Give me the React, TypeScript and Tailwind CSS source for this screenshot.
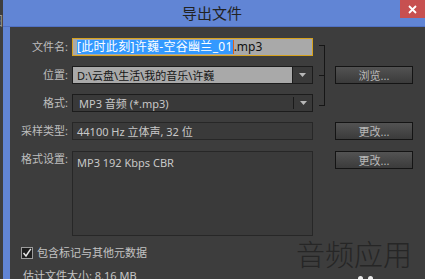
import React from "react";

const font = "font-['Noto_Sans','Noto_Sans_CJK_SC',sans-serif]";

function Label({ children, top }: { children: React.ReactNode; top?: boolean }) {
  return (
    <div
      className={`w-[58px] shrink-0 text-right text-[11px] leading-[14px] text-[#bdbdbd] ${
        top ? "self-start pt-[1px]" : ""
      }`}
    >
      {children}
    </div>
  );
}

function Caret() {
  return (
    <svg width="7" height="4" viewBox="0 0 7 4" className="block">
      <path d="M0 0H7L3.5 4Z" fill="#b8b8b8" />
    </svg>
  );
}

function Btn({ children, className = "" }: { children: React.ReactNode; className?: string }) {
  return (
    <div
      className={`flex h-[18px] w-[78px] shrink-0 items-center justify-center border border-[#141414] bg-gradient-to-b from-[#535353] to-[#3b3b3b] text-[11px] leading-none text-[#b9b9b9] ${className}`}
    >
      {children}
    </div>
  );
}

export default function App() {
  return (
    <div className={`relative flex h-[279px] w-[425px] overflow-hidden bg-[#3d3d3d] ${font}`}>
      {/* sliver of the window behind */}
      <div className="w-[3px] shrink-0 overflow-hidden bg-[#3e3e3e] pt-[14px]">
        <span className="-ml-[10px] block text-[13px] leading-none text-[#9a9a9a]">图</span>
      </div>

      {/* dialog */}
      <div className="flex flex-1 flex-col bg-[#6185d5]">
        <div className="relative flex h-[27px] shrink-0 items-start justify-center border-b border-[#5071c4]">
          <span className="ml-[-4px] pt-[3px] text-[15px] leading-[20px] text-[#222222]">导出文件</span>
          <div className="absolute right-0 top-0 flex h-[18px] w-[25px] items-center justify-center bg-[#c75050]">
            <svg width="9" height="9" viewBox="0 0 9 9">
              <path d="M1 1L8 8M8 1L1 8" stroke="#ffffff" strokeWidth="1.8" />
            </svg>
          </div>
        </div>

        <div className="ml-[7px] flex flex-1 flex-col bg-[#3d3d3d] pt-[11px]">
          {/* file name / location / format */}
          <div className="flex items-center">
            <div className="flex flex-col gap-[10px]">
              <div className="flex items-center">
                <Label>文件名:</Label>
                <div className="ml-[4px] flex h-[18px] w-[241px] items-center border border-[#d6a21e] bg-[#a9a9a9] pl-[4px] text-[12px] leading-none">
                  <span className="bg-[#3399ff] py-[1px] tracking-[0.3px] text-white">[此时此刻]许巍-空谷幽兰_01</span>
                  <span className="h-[14px] w-[1px] bg-[#e0601a]" />
                  <span className="text-[#111111]">.mp3</span>
                </div>
              </div>
              <div className="flex items-center">
                <Label>位置:</Label>
                <div className="ml-[4px] flex h-[18px] w-[241px] border border-[#1c1c1c]">
                  <div className="flex flex-1 items-center border-r border-[#1c1c1c] bg-[#a9a9a9] pl-[4px] text-[11px] leading-none text-[#151515]">
                    D:\云盘\生活\我的音乐\许巍
                  </div>
                  <div className="flex w-[19px] items-center justify-center bg-[#3a3a3a]">
                    <Caret />
                  </div>
                </div>
              </div>
              <div className="flex items-center">
                <Label>格式:</Label>
                <div className="ml-[4px] flex h-[18px] w-[241px] items-center border border-[#1c1c1c] bg-[#393939]">
                  <div className="flex-1 pl-[6px] text-[11px] leading-none text-[#c8c8c8]">MP3 音频 (*.mp3)</div>
                  <span className="h-[12px] w-[1px] bg-[#1a1a1a]" />
                  <div className="flex w-[18px] items-center justify-center">
                    <Caret />
                  </div>
                </div>
              </div>
            </div>
            <div className="relative ml-[6px] h-[61px] w-[6px] border-y border-r border-[#161616]">
              <span className="absolute left-0 top-[29px] h-[1px] w-[5px] bg-[#161616]" />
            </div>
            <Btn className="ml-[10px]">浏览...</Btn>
          </div>

          {/* sample type */}
          <div className="mt-[10px] flex items-center">
            <Label>采样类型:</Label>
            <div className="ml-[4px] flex h-[18px] w-[241px] items-center border border-[#272727] bg-[#3a3a3a] pl-[4px] text-[11px] leading-none text-[#c8c8c8]">
              44100 Hz 立体声, 32 位
            </div>
            <Btn className="ml-[22px]">更改...</Btn>
          </div>

          {/* format settings */}
          <div className="mt-[11px] flex items-start">
            <Label top>格式设置:</Label>
            <div className="ml-[4px] h-[85px] w-[241px] border border-[#272727] bg-[#3a3a3a] pl-[4px] pt-[4px] text-[11px] leading-[14px] text-[#c8c8c8]">
              MP3 192 Kbps CBR
            </div>
            <Btn className="ml-[22px]">更改...</Btn>
          </div>

          {/* metadata checkbox */}
          <div className="mt-[10px] flex items-center pl-[11px]">
            <div className="flex h-[12px] w-[12px] items-center justify-center border border-[#9c9c9c] bg-[#1e1e1e]">
              <svg width="10" height="10" viewBox="0 0 10 10">
                <path d="M1.5 5L4 8L8.8 0.8" fill="none" stroke="#e4e4e4" strokeWidth="1.5" />
              </svg>
            </div>
            <span className="ml-[4px] text-[11px] leading-[14px] text-[#c4c4c4]">包含标记与其他元数据</span>
          </div>

          <div className="mt-[9px] pl-[13px] text-[11px] leading-[14px] text-[#c4c4c4]">估计文件大小: 8.16 MB</div>
        </div>
      </div>

      {/* watermark */}
      <div className="absolute left-[296px] top-[237px] text-[29px] font-light leading-[36px] text-[#262626]">
        音频应用
      </div>
      <div className="absolute left-[358px] top-[276px] flex gap-[5px]">
        <span className="h-[5px] w-[5px] rounded-full bg-[#e8e8e8]" />
        <span className="h-[5px] w-[5px] rounded-full bg-[#e8e8e8]" />
      </div>
    </div>
  );
}
